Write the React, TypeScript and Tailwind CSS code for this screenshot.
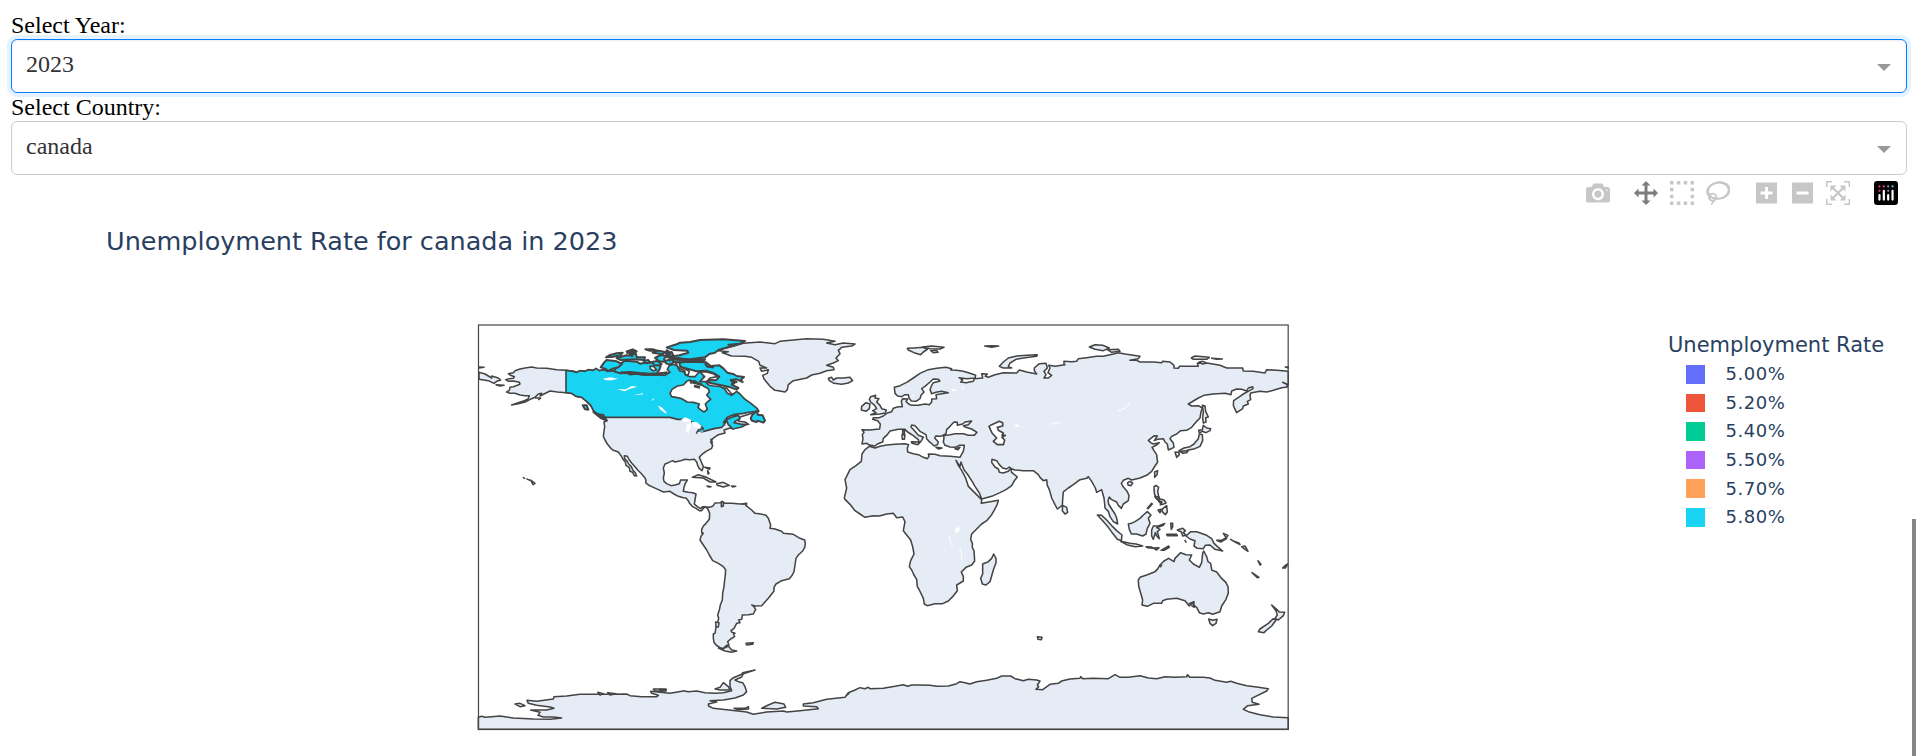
import type { ReactNode } from 'react';

// The map is digitised in tiles, each one with its own origin in map units
const TILES = {
  A: [-24, -21],
  B: [546, -21],
  C: [1086, -21],
  D: [1746, -21],
  E: [546, 495],
  F: [1086, 465],
  G: [1746, 465],
  S: [-24, 465],
  T: [336, 15],
} as const;

type Tile = keyof typeof TILES;

// "A 1,2 3,4 B 5,6" -> svg path in map units
function trace(src: string, close = true) {
  let tile: Tile = 'A';
  const pts: string[] = [];
  for (const token of src.trim().split(/\s+/)) {
    if (token in TILES) {
      tile = token as Tile;
      continue;
    }
    const [x, y] = token.split(',').map(Number);
    pts.push(`${x + TILES[tile][0]} ${y + TILES[tile][1]}`);
  }
  return `M${pts.join('L')}${close ? 'Z' : ''}`;
}

const AMERICAS = `A 288,157 260,155 230,151 200,150 185,147 165,150 150,153 135,158 130,164 115,167 120,171 133,176 130,181 118,182 107,185 115,190 130,189 148,193 150,198 142,202 130,206 120,208 118,217 110,222 120,226 135,226 150,231 165,233 178,233 174,243 158,250 140,256 125,261
145,257 168,251 185,242 195,238 205,228 215,226 210,234 222,228 240,219 262,222 288,224
305,226 318,235 335,238 350,250 362,262 372,280 385,290 405,298 411,308 402,312 404,325 402,340 400,355 405,366 412,378 420,388 428,396 445,402 453,413 460,425 466,432 468,442 478,449 480,460 488,463 493,473 500,474 496,464 488,455 484,446 476,438 472,430 464,422 463,413 472,415 478,426 485,435 495,446 503,456 515,468 525,480 528,487 527,494 535,501 550,508 565,515 580,522 600,520 612,528 625,535 640,539 648,540 656,550
E 88,39 98,50 108,55 118,62 125,62 130,55 135,50 143,56 149,70 148,88 138,100 130,108 125,118 125,128 130,130 123,139 120,150 130,165 140,180 148,195 158,212 175,220 190,230 197,240 196,255 194,270 192,290 188,310 187,330 181,345 178,360 173,375 176,385 172,400 168,412 165,430 160,432 160,445 162,457 168,465 180,473 190,476 200,466 207,465 203,455 212,447 224,440 221,432 225,430 216,427 213,422 222,415 230,400 240,398 236,390 245,388 247,375 265,374 280,372 287,358 282,350 275,345 285,348 305,347 315,336 325,325 335,312 342,303 342,292 348,282 365,272 388,266 397,255 402,245 405,225 408,205 415,195 428,183 434,172 436,160 434,150 420,145 400,133 385,131 370,130 365,124 345,117 330,115 332,105 325,85 318,76 302,72 285,70 275,60 260,48 257,42 240,42 215,40 195,40 187,34 182,38 165,39 158,49 148,52 135,50 128,50 122,56 112,50 103,42 105,30 108,12 98,8 85,7
B 70,520 72,508 76,496 82,486 62,486 58,497 45,501 33,503 20,497 12,490 10,480 13,465 10,450 15,438 25,434 38,428 45,432 62,428 75,424 88,425 103,424 110,432 113,442 118,452 126,458 130,446 124,432 118,418 125,410 138,400 155,391 158,382 152,372 158,362 175,350 195,345 192,336 210,330 220,332 245,322 266,319 255,312 236,310 238,298 262,290 297,279 262,250 232,225 215,228 200,210 146,210 85,176 A 605,165 570,165 545,170 510,168 480,170 470,164 450,166 430,158 412,160 400,156 390,159 378,153 370,157 355,156 345,160 330,158 320,163 310,160`;

const CANADA = `A 288,157 310,160 320,163 330,158 345,160 355,155 370,157 378,151 388,158 400,155 412,160 430,158 450,166 470,164 480,170 500,168 520,171 545,170
T 205,135 225,136 240,127 232,118 238,106 250,103 262,108 268,122 282,126 288,136 300,140 315,140 325,128 345,122 355,132 340,140 345,152 355,165 370,168 390,169 405,178 412,190 425,196 440,184 450,192 465,208 480,218 502,236 505,244 480,246 460,250 430,254 412,262 400,278 412,268 430,260 445,256 450,266 438,272 432,278 455,283 470,283 455,291 428,297 422,290 415,284 410,272 402,285 395,292 372,296 350,302 320,309 325,300 340,296 330,286 312,280 298,270 285,268 262,268 240,262 45,262
A 405,298 400,290 385,290 372,280 362,262 350,250 335,238 318,235 305,226 288,224`;

const EURASIA_AFRICA = `C 88,381 80,376 66,378 69,362 67,350 72,343 66,335 90,336 110,334 119,333 121,318 113,308 98,304 100,299 118,299 130,294 142,285 155,281 160,271 175,266 187,266 184,250 188,242 203,243 198,250 206,258 215,262 235,262 255,258 268,260 275,252 275,243 290,242 288,230 305,227 325,224 305,220 288,223 275,227 270,215 275,202 280,194 300,189 295,184 280,183 270,192 255,205 245,212 252,222 243,232 240,242 228,250 214,249 207,240 205,230 195,230 185,236 173,234 165,226 163,208 180,203 200,193 220,180 240,166 265,155 290,151 318,148 335,152 332,156 350,157 370,160 390,166 407,172 405,180 380,182 357,179 368,186 362,192 378,194 400,190 403,182 428,180 425,167 442,168 436,175 445,178 465,170 490,164 530,165 538,156 560,162 590,168 583,158 583,150 598,137 618,136 622,150 612,160 618,170 612,180 625,180 635,172 624,164 630,150 626,142 645,145 675,140
D 12,140 12,130 35,131 50,130 55,122 80,119 110,115 130,115 160,108 175,104 195,108 240,115 235,122 210,127 230,127 240,132 280,132 305,134 308,130 330,132 342,142 342,150 355,151 358,145 415,145 412,136 445,136 480,142 500,150 548,150 550,159 580,160 615,165 620,155 650,157 685,160 685,200 668,193 680,199 682,207 665,209 640,217 620,222 600,220 572,225 570,232 572,245 562,250 565,258 550,264 548,272 530,284 524,272 520,262 521,248 540,235 550,228 568,218 579,212 578,206 565,210 560,219 545,214 530,213 515,219 513,230 495,226 460,228 432,232 415,240 385,258 395,264 415,263 427,270 423,282 420,300 410,310 395,328 380,337 362,338 350,348 335,355 330,362 340,375 342,388 325,396 322,378 315,372 310,362 292,364 283,368 292,354 283,353 265,367 272,374 280,378 298,374 290,381 276,388 282,398 290,410 291,420 293,432 283,447 275,460 260,472 240,480 215,486 205,481 190,487 184,496 190,507 200,518 207,532 205,548 190,558 184,571 175,562 170,552 155,545 148,537 144,548 146,558 155,573 165,588 170,600 173,618 160,611 150,596 145,580 135,570 134,558 132,540 128,526 125,515 110,523 106,510 95,490 85,476 80,481 60,485 40,500 25,510 12,520
C 670,522 668,545 667,562 652,573 645,560 635,540 628,515 622,502 620,485 610,488 600,478 595,470 580,458 550,458 525,456 516,453 508,447 500,453 488,450 478,440 470,428 456,424 455,433 465,447 475,453 478,463 490,465 505,460 512,451 515,463 532,477 522,490 515,503 498,515 480,524 455,535 425,543 418,525 405,505 395,488 382,468 372,455 366,440 363,432 360,445 348,427 355,442 365,457 376,478 385,505 400,520 415,535 425,545 424,556 450,551 475,547
F 475,62 470,77 462,92 455,104 440,122 425,132 410,147 395,162 392,178 397,190 397,203 402,212 404,243 395,255 378,262 364,276 370,290 370,303 350,315 352,332 338,350 325,363 308,371 285,371 262,377 253,372 250,355 238,330 232,320 230,298 222,285 215,270 208,260 212,242 222,222 218,200 212,180 200,165 190,152 195,125 188,111 170,113 160,100 140,102 118,108 100,107 75,112 60,102 45,92 30,73 15,58
C 13,540 20,510 15,485 30,455 48,443 64,430 66,408 75,395 88,385 105,390 120,385 140,381 165,379 195,377 206,380 202,390 203,402 220,407 235,410 250,418 262,422 267,415 265,408 285,409 300,413 330,415 360,418 370,400 373,382 358,382 345,388 330,387 315,382 310,372 312,360 310,353 330,350 345,347 370,347 385,352 403,352 411,343 395,333 375,327 370,323 385,320 395,309 375,312 368,318 352,322 352,313 342,312 330,325 320,335 318,347 302,355 287,354 284,360 295,372 292,380 283,384 268,371 260,362 258,350 240,340 225,323 215,321 213,327 222,337 235,352 250,358 243,370 238,376 235,365 220,353 203,342 195,334 175,334 150,339 142,350 130,361 128,372 112,378 105,384`;

const ANTARCTICA = `S 25,712 35,709 45,712 65,710 90,708 130,714 190,717 240,718 275,714 250,711 220,711 204,706 210,697 182,690 230,690 252,685 240,681 200,676 175,670 171,661 200,664 250,657 252,650 290,648 330,643 400,643 470,642 480,647 515,650 560,650 565,646 545,640 542,634 600,640 640,633
E 70,602 85,605 110,603 135,608 165,610 190,608 215,602 210,590 210,572 220,563 245,553 248,548 285,540 250,551 245,561 225,570 235,575 248,578 255,590 260,605 250,615 225,624 190,630 150,632 170,636 145,642 146,648 160,655 200,659 260,666 280,673 320,666 370,663 380,666 420,662 475,656 470,650 430,648 430,642 460,638 500,628 555,622 560,615
F 20,645 25,638 45,630 60,623 75,626 85,622 90,626 130,625 165,619 190,614 203,619 215,615 235,615 270,616 290,619 325,618 350,611 360,605 375,608 390,612 410,605 440,601 470,595 485,588 512,588 525,596 550,602 565,598 590,600 600,603 592,615 596,620 588,628 608,629 630,613 655,610 665,603 690,597 720,595
G 62,590 68,596 100,595 145,596 165,584 180,592 205,592 240,587 265,594 290,596 315,590 345,592 380,590 382,584 390,592 430,592 450,594 465,601 500,607 512,604 530,610 560,617 590,621 625,626 620,633 575,655 577,667 597,673 563,677 550,688 565,695 600,704 640,711 685,713 685,748 S 25,748`;

const GREENLAND = `B 175,98 190,92 230,82 250,76 300,72 345,77 360,70 400,66 440,62 490,64 525,70 500,75 525,80 550,75 585,78 575,84 545,88 535,97 540,107 528,120 535,128 520,135 500,142 520,148 522,155 500,158 480,166 455,171 440,180 400,188 385,200 382,215 375,222 355,218 345,217 330,205 312,183 308,172 322,166 325,155 305,160 300,150 320,150 300,142 296,130 275,118 255,115 215,114 187,104 205,101`;

const LANDS = [
  GREENLAND,
  // chukotka overlap and aleutians
  'A 27,163 45,168 65,180 65,174 85,180 92,186 80,190 72,196 55,188 27,184',
  // iceland
  'B 505,181 515,178 520,186 530,180 550,180 570,178 578,188 565,195 545,199 522,196 508,188',
  // great britain, ireland
  'C 92,236 107,232 105,240 117,242 110,252 120,262 125,272 139,276 136,285 120,288 92,290 108,284 98,278 110,272 104,262 92,252 88,244',
  'C 65,265 78,254 90,258 88,272 78,280 64,276',
  // mediterranean islands
  'C 188,336 194,338 193,348 188,346',
  'C 186,350 195,350 193,364 187,364',
  'C 214,371 238,372 234,380 216,376',
  'C 288,388 306,390 296,393',
  'C 345,392 360,388 354,395',
  // svalbard, franz josef, novaya zemlya
  'C 202,91 222,90 250,88 262,94 250,102 242,110 222,104 205,96',
  'C 248,87 275,84 312,88 300,93 270,92',
  'C 272,98 290,97 294,103 280,104',
  'C 434,84 455,83 476,84 455,88',
  'C 478,145 490,132 505,120 530,114 560,112 592,110 590,115 555,119 528,124 510,135 505,146 515,150 490,150',
  // severnaya zemlya, new siberian, wrangel
  'D 88,87 105,80 128,82 148,90 130,98 105,94',
  'D 142,95 175,94 180,100 155,103',
  'D 394,120 405,114 448,118 440,124 400,124',
  'D 416,133 428,130 440,135 428,138',
  'D 455,121 487,123 470,124',
  // sakhalin, japan, taiwan, hainan
  'D 427,262 435,264 437,280 445,297 437,299 438,312 430,315 428,300 430,282',
  'D 430,322 440,330 452,332 450,338 438,344 427,340 418,345 416,337 427,335',
  'D 418,348 427,350 428,368 420,385 405,392 385,396 378,400 360,402 357,398 372,390 390,386 402,378 415,362',
  'D 345,403 356,403 358,410 350,418',
  'D 362,400 385,398 380,404 368,406',
  'D 284,462 293,458 291,470 284,478',
  'D 203,494 210,490 218,495 213,503 204,501',
  'C 668,562 680,568 683,583 675,588 667,578',
  // philippines
  'D 282,506 288,502 296,508 293,520 296,535 288,540 283,526',
  'D 298,542 312,546 318,555 306,560 296,550',
  'D 284,535 298,538 292,545',
  'D 308,572 320,563 322,582 316,590 306,580',
  'D 294,576 304,574 300,584',
  'D 262,571 275,556 277,558 264,572',
  // indonesia, new guinea
  'G 112,105 125,106 140,120 158,140 170,152 186,165 184,182 172,178 158,160 145,142 128,122',
  'G 182,184 210,190 228,192 248,198 225,200 200,194',
  'G 205,132 214,130 225,125 240,115 250,105 262,95 273,105 265,115 270,130 262,145 258,162 248,168 230,162 214,162 208,148',
  'G 275,150 280,138 295,138 314,130 310,136 290,143 300,148 292,155 298,176 290,168 286,158 280,178 275,168',
  'G 332,130 338,130 338,140 334,148',
  'G 320,163 350,163 352,167 322,167',
  'G 352,150 368,145 376,152 370,158 378,166 368,168 364,156',
  'G 378,168 392,155 410,155 440,166 455,176 462,190 475,202 488,213 465,208 450,195 436,196 430,206 412,205 402,198 405,182 390,177',
  'G 258,200 275,201 280,205 262,203',
  'G 280,204 297,203 290,210',
  'G 303,211 326,198 328,202 312,211',
  'G 470,181 485,181 500,172 504,166 490,160 500,176 482,186',
  'G 512,178 528,188 540,194 538,190 520,183',
  'G 545,200 555,198 564,214 552,206',
  'G 594,242 603,253 600,255',
  'G 576,278 597,292 592,293',
  'G 668,264 674,258 683,252 676,264',
  // australia, tasmania, new zealand
  'G 235,300 240,292 260,285 285,275 292,268 300,255 312,243 326,235 342,245 345,235 362,218 378,224 395,225 388,240 400,252 418,262 425,248 428,220 431,213 440,230 444,245 452,250 455,270 470,276 482,292 498,308 504,320 505,340 498,358 485,378 480,395 458,403 445,398 430,402 418,398 410,382 400,375 402,365 388,378 375,362 350,355 320,358 308,362 305,370 280,370 262,379 246,375 248,360 240,332 236,318',
  'G 446,417 458,421 471,418 468,430 458,437 450,430',
  'G 635,375 650,388 658,396 674,397 670,407 655,420 645,415 652,405 648,392',
  'G 640,416 648,420 635,438 620,450 612,458 595,455 600,447 625,430',
  // madagascar, kerguelen
  'F 461,222 468,235 468,248 460,270 450,305 438,315 427,312 422,295 428,282 428,252 445,245 455,235',
  'F 592,470 606,472 604,479 594,478',
  // caribbean, hawaii
  'B 97,478 115,470 140,478 168,492 150,492 130,480',
  'B 170,497 190,493 208,502 190,507 172,502',
  'B 141,504 153,506 145,507',
  'B 214,504 227,505 218,507',
  'B 134,448 150,450 148,454',
  'B 143,458 147,466 144,468',
  'A 182,486 195,496 189,500',
  'A 160,479 164,481',
  'A 171,483 180,487',
  'A 78,200 102,202 90,204',
  'A 27,147 42,148 27,150',
  'D 676,147 686,147 686,150',
  // tierra del fuego, falklands
  'E 190,476 205,468 215,480 230,483 215,487 195,483 175,474',
  'E 258,460 280,458 278,463 260,465',
  'E 167,396 177,398 175,411 168,410',
  // antarctic islands
  'E 165,597 180,592 190,578 205,590 210,600 180,600',
  'E 305,655 325,645 345,637 372,642 377,652 350,657',
  'E 222,655 255,655 265,650 266,657 235,659',
  'S 135,672 150,670 165,677 150,680',
  'S 383,637 400,641 390,645',
  'S 413,638 438,641 420,645',
  'S 550,627 588,627 588,633 555,633',
  'E 0,598 18,600 0,604',
];

const ARCTIC_ISLANDS = [
  'T 230,52 262,42 270,38 300,36 330,30 400,28 465,33 450,41 415,44 435,46 408,53 385,60 375,68 358,72 345,82 300,88 262,86 242,80 268,76 295,68 292,62 252,60',
  'T 228,70 245,66 250,76 232,82',
  'T 242,88 265,84 300,90 345,88 340,96 310,97 262,97 240,95',
  'T 262,100 285,95 320,96 348,97 362,108 388,106 400,115 412,128 432,133 440,138 462,141 452,150 458,156 440,148 422,150 432,160 425,164 445,174 440,179 415,170 390,165 365,160 352,157 360,150 378,151 388,140 368,128 348,122 320,124 298,118 275,112',
  'T 82,108 105,92 140,95 150,101 178,95 212,108 208,120 200,130 180,131 150,129 118,126 92,130 72,124',
  'T 32,112 42,98 50,90 80,94 96,102 85,112 68,116 55,123 45,116',
  'T 58,76 80,70 98,68 92,76 70,80 48,82',
  'T 80,84 110,76 128,78 120,72 138,72 140,82 165,82 162,90 130,88 92,90',
  'T 110,64 128,58 140,64 130,71 112,69',
  'T 166,58 190,58 205,63 180,62',
  'T 188,68 205,62 226,66 218,73',
  'T 195,84 212,75 228,78 222,88 228,96 208,94',
  'T 186,96 202,93 215,102 205,106 192,106',
  'T 226,92 245,88 252,96 240,104 228,100',
  'T 160,92 175,90 180,98 168,100',
  // vancouver, haida gwaii, newfoundland
  'T 10,246 28,254 45,265 50,272 32,264',
  'A 338,262 350,262 355,275 345,274',
  'T 482,266 486,256 494,248 502,242 503,254 518,256 525,272 520,278 502,272 500,276 486,272',
];

const BAYS = [
  'T 240,190 246,178 262,168 280,165 290,154 300,150 312,160 330,160 340,168 355,176 358,186 350,195 362,208 352,216 346,222 352,238 342,246 330,238 324,232 328,222 310,217 292,216 275,206 258,202 245,200',
  'T 256,98 268,98 270,110 285,116 298,124 294,136 286,134 284,122 266,114',
  'T 330,126 350,126 372,132 382,140 360,144 350,155 330,154 344,140',
  'T 180,108 192,110 200,120 190,122 182,118',
  // caspian
  'C 447,325 455,320 478,310 488,314 488,324 472,328 475,337 490,345 486,352 496,352 486,358 494,366 490,380 472,380 460,370 470,360 456,345',
];

const LAKES = [
  'T 38,146 62,142 84,146 65,151 48,151',
  'T 80,178 108,178 125,168 142,170 118,177 105,184',
  'T 130,196 158,190 160,193 140,195',
  'T 182,212 194,203 190,210',
  'T 203,227 215,232 228,245 230,252 212,240',
  'T 272,270 285,262 305,270 302,277 285,276',
  'T 290,285 300,278 303,290 296,310 288,306',
  'T 305,276 320,276 335,288 326,295 312,290',
  'T 320,308 342,302 325,312',
  'C 333,212 345,214 350,220 337,220',
  'C 364,206 374,212 369,216',
  'C 216,230 224,229 218,235',
  'C 523,328 530,316 537,326',
  'F 344,146 356,140 360,148 354,158 346,156',
  'E 197,215 205,221 201,222',
];

// long narrow lakes: balkhash, baikal, tanganyika, malawi
const NARROW_LAKES = [
  'C 629,323 635,317 645,315 662,315',
  'D 173,279 195,271 205,262 209,253',
  'F 329,168 329,182 338,200',
  'F 360,207 364,218 365,237',
];

const COAST_DETAILS = [
  'G 386,372 400,366 403,382 394,376',
  'G 300,262 306,254',
  'G 374,180 379,188',
  'F 20,645 28,640',
  'A 195,240 212,240 205,246',
  'E 184,34 184,50 190,48 190,36',
  'E 245,42 260,40 258,50',
  'D 292,546 306,552 300,562',
  'B 152,362 158,376',
];

function WorldMap() {
  return (
    <svg viewBox="-3 -3 2436 1221" className="block h-[407px] w-[812px] shrink-0">
      <g stroke="#444" strokeWidth="4.6" strokeLinejoin="round">
        <g fill="#e5ecf6">
          <path d={trace(AMERICAS)} />
          <path d={trace(EURASIA_AFRICA)} />
          <path d={trace(ANTARCTICA)} />
          {LANDS.map((d) => (
            <path key={d} d={trace(d)} />
          ))}
        </g>
        <g fill="#19d3f3" strokeWidth="6">
          <path d={trace(CANADA)} strokeWidth="5" />
          {ARCTIC_ISLANDS.map((d) => (
            <path key={d} d={trace(d)} />
          ))}
        </g>
        <g fill="#fff" strokeWidth="5">
          {BAYS.map((d) => (
            <path key={d} d={trace(d)} />
          ))}
        </g>
        <g fill="none">
          {COAST_DETAILS.map((d) => (
            <path key={d} d={trace(d, false)} />
          ))}
          <path d={trace('T 300,158 312,154 322,160 335,164', false)} strokeWidth="9" />
          <path d={trace('T 312,168 330,172', false)} strokeWidth="8" />
          <path d={trace('T 228,60 240,70 232,78 246,84 236,92', false)} strokeWidth="9" />
          <path d={trace('T 250,88 300,91 340,90', false)} strokeWidth="7" />
          <path d={trace('T 345,100 352,110 372,112', false)} strokeWidth="7" />
          <path d={trace('T 422,150 440,156 424,160', false)} strokeWidth="6" />
          <path d={trace('T 92,128 130,129 160,133 200,133 232,128', false)} strokeWidth="8" />
          <path d={trace('T 116,65 136,64', false)} strokeWidth="10" />
        </g>
      </g>
      <g fill="#fff">
        {LAKES.map((d) => (
          <path key={d} d={trace(d)} />
        ))}
      </g>
      <g fill="none" stroke="#fff" strokeWidth="3">
        {NARROW_LAKES.map((d) => (
          <path key={d} d={trace(d, false)} />
        ))}
      </g>
      <rect x="1.5" y="0" width="2429" height="1213.5" fill="none" stroke="#444" strokeWidth="3.6" />
    </svg>
  );
}

function ModeIcon({ d, width = 1000, active }: { d: string; width?: number; active?: boolean }) {
  return (
    <span className="flex w-9 justify-center">
      <svg viewBox={`0 0 ${width} 1000`} className="h-6">
        <path
          d={d}
          transform="matrix(1 0 0 -1 0 850)"
          fill={active ? 'rgba(68,68,68,0.7)' : 'rgba(68,68,68,0.3)'}
        />
      </svg>
    </span>
  );
}

const ICONS = {
  camera:
    'm500 450c-83 0-150-67-150-150 0-83 67-150 150-150 83 0 150 67 150 150 0 83-67 150-150 150z m400 150h-120c-16 0-34 13-39 29l-31 93c-6 15-23 28-40 28h-340c-16 0-34-13-39-28l-31-94c-6-15-23-28-40-28h-120c-55 0-100-45-100-100v-450c0-55 45-100 100-100h800c55 0 100 45 100 100v450c0 55-45 100-100 100z m-400-550c-138 0-250 112-250 250 0 138 112 250 250 250 138 0 250-112 250-250 0-138-112-250-250-250z m365 380c-19 0-35 16-35 35 0 19 16 35 35 35 19 0 35-16 35-35 0-19-16-35-35-35z',
  pan: 'm1000 350l-187 188 0-125-250 0 0 250 125 0-188 187-187-187 125 0 0-250-250 0 0 125-188-188 186-187 0 125 252 0 0-250-125 0 187-188 188 188-125 0 0 250 250 0 0-126 187 188z',
  select: [0, 286, 571, 857]
    .flatMap((x) => [-150, 136, 421, 707].map((y) => [x, y]))
    .filter(([x, y]) => x === 0 || x === 857 || y === -150 || y === 707)
    .map(([x, y]) => `M${x} ${y}h143v143h-143z`)
    .join(''),
  lasso:
    'm1018 538c-36 207-290 336-568 286-277-48-473-256-436-463 10-57 36-108 76-151-13-66 11-137 68-183 34-28 75-41 114-42l-55-70 0 0c-2-1-3-2-4-3-10-14-8-34 5-45 14-11 34-8 45 4 1 1 2 3 2 5l0 0 113 140c16 11 31 24 45 40 4 3 6 7 8 11 48-3 100 0 151 9 278 48 473 255 436 462z m-624-379c-80 14-149 48-197 96 42 42 109 47 156 9 33-26 47-66 41-105z m-187-74c-19 16-33 37-39 60 50-32 109-55 174-68-42-25-95-24-135 8z m360 75c-34-7-69-9-102-8 8 62-16 128-68 170-73 59-175 54-244-5-9 20-16 40-20 61-28 159 121 317 333 354s407-60 434-217c28-159-121-318-333-355z',
  plus: 'm1 787l0-875 875 0 0 875-875 0z m687-500l-187 0 0-187-125 0 0 187-188 0 0 125 188 0 0 187 125 0 0-187 187 0 0-125z',
  minus: 'm0 788l0-876 875 0 0 876-875 0z m688-500l-500 0 0 125 500 0 0-125z',
  autoscale:
    'm250 850l-187 0-63 0 0-62 0-188 63 0 0 188 187 0 0 62z m688 0l-188 0 0-62 188 0 0-188 62 0 0 188 0 62-62 0z m-875-938l0 188-63 0 0-188 0-62 63 0 187 0 0 62-187 0z m875 188l0-188-188 0 0-62 188 0 62 0 0 62 0 188-62 0z m-125 188l-1 0-93-94-156 156 156 156 92-93 2 0 0 250-250 0 0-2 93-92-156-156-156 156 94 92 0 2-250 0 0-250 0 0 93 93 157-156-157-156-93 94 0 0 0-250 250 0 0 0-94 93 156 157 156-157-93-93 0 0 250 0 0 250z',
};

function PlotlyLogo() {
  return (
    <span className="flex w-9 justify-center">
      <svg viewBox="0 0 132 132" className="size-6">
        <rect width="132" height="132" rx="18" />
        <circle cx="30" cy="30" r="6" fill="#ff2c6d" />
        <circle cx="30" cy="54" r="6" fill="#ff2c6d" />
        <circle cx="54" cy="30" r="6" fill="#d0538f" />
        <circle cx="78" cy="30" r="6" fill="#a084c4" />
        <circle cx="78" cy="54" r="6" fill="#a084c4" />
        <circle cx="102" cy="30" r="6" fill="#5cc3e6" />
        <path
          d="M30 78v24M54 54v48M78 78v24M102 54v48"
          stroke="#fff"
          strokeWidth="12"
          strokeLinecap="round"
        />
      </svg>
    </span>
  );
}

function ModeBar() {
  return (
    <div className="flex justify-end gap-3 pt-1.5 pr-3">
      <ModeIcon d={ICONS.camera} />
      <div className="flex">
        <ModeIcon d={ICONS.pan} active />
        <ModeIcon d={ICONS.select} />
        <ModeIcon d={ICONS.lasso} width={1031} />
      </div>
      <div className="flex">
        <ModeIcon d={ICONS.plus} width={875} />
        <ModeIcon d={ICONS.minus} width={875} />
        <ModeIcon d={ICONS.autoscale} />
      </div>
      <PlotlyLogo />
    </div>
  );
}

interface DropdownProps {
  label: ReactNode;
  value: string;
  focused?: boolean;
}

function Dropdown({ label, value, focused }: DropdownProps) {
  return (
    <div className="pr-[9px] pl-[11px] text-2xl leading-7">
      <div className="h-7 text-black">{label}</div>
      <div
        className={`flex h-[54px] items-center justify-between rounded-[6px] border pr-[15px] pl-3.5 text-[#333] ${
          focused
            ? 'border-[#007eff] shadow-[inset_0_1px_2px_rgba(0,0,0,0.075),0_0_0_4px_rgba(0,126,255,0.1)]'
            : 'border-[#ccc]'
        }`}
      >
        <span className="pb-1">{value}</span>
        <span className="mt-[3px] size-0 border-x-[7px] border-t-[7px] border-x-transparent border-t-[#999]" />
      </div>
    </div>
  );
}

const LEGEND = [
  { rate: '5.00%', color: 'bg-[#636efa]' },
  { rate: '5.20%', color: 'bg-[#ef553b]' },
  { rate: '5.40%', color: 'bg-[#00cc96]' },
  { rate: '5.50%', color: 'bg-[#ab63fa]' },
  { rate: '5.70%', color: 'bg-[#ffa15a]' },
  { rate: '5.80%', color: 'bg-[#19d3f3]' },
];

function Legend() {
  return (
    <div className="w-[248px] pt-2">
      <div className="h-[28px] text-[21px] leading-[26px] whitespace-nowrap">Unemployment Rate</div>
      {LEGEND.map((item) => (
        <div key={item.rate} className="flex h-[28.6px] items-center pl-[18px]">
          <span className={`size-[18.5px] ${item.color}`} />
          <span className="ml-[21px] text-lg tracking-[0.55px]">{item.rate}</span>
        </div>
      ))}
    </div>
  );
}

export default function App() {
  return (
    <div className="relative h-[756px] overflow-hidden bg-white pt-[11px] font-['Liberation_Serif',serif]">
      <Dropdown label="Select Year:" value="2023" focused />
      <Dropdown label="Select Country:" value="canada" />
      <div className="font-['Verdana','DejaVu_Sans',sans-serif] text-[#2a3f5f]">
        <ModeBar />
        <h1 className="mt-[20px] ml-[106px] h-8 text-[25.5px] leading-8 whitespace-nowrap">
          Unemployment Rate for canada in 2023
        </h1>
        <div className="mt-[67px] flex justify-between pl-[477.33px]">
          <WorldMap />
          <Legend />
        </div>
      </div>
      <div className="absolute top-[519px] right-0 h-[237px] w-1 bg-[#858585]" />
    </div>
  );
}
